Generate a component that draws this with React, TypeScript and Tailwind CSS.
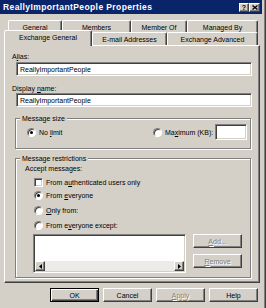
import React from 'react'

const raised =
  'border border-t-white border-l-white border-r-[#404040] border-b-[#404040] shadow-[inset_-1px_-1px_0_#808080]'
const sunken =
  'border border-t-[#808080] border-l-[#808080] border-r-white border-b-white shadow-[inset_1px_1px_0_#404040,inset_-1px_-1px_0_#d4d0c8]'
const disabledText = 'text-[#808080] [text-shadow:1px_1px_0_#fff]'

function Radio({ checked }: { checked?: boolean }) {
  return (
    <span className="flex h-[9px] w-[9px] shrink-0 items-center justify-center rounded-full border border-t-[#808080] border-l-[#808080] border-r-white border-b-white bg-white shadow-[inset_1px_1px_0_#404040]">
      {checked && <span className="h-[3px] w-[3px] rounded-full bg-black" />}
    </span>
  )
}

function Check() {
  return <span className={`h-[9px] w-[9px] shrink-0 bg-white ${sunken}`} />
}

function Button({ children, disabled, isDefault }: { children: React.ReactNode; disabled?: boolean; isDefault?: boolean }) {
  const frame = isDefault
    ? 'border border-black shadow-[inset_1px_1px_0_#fff,inset_-1px_-1px_0_#404040,inset_-2px_-2px_0_#808080]'
    : raised
  return (
    <div className={`flex h-[14px] w-[49px] items-center justify-center leading-[9px] ${frame} ${disabled ? disabledText : ''}`}>
      {children}
    </div>
  )
}

function Tab({ label, width, selected }: { label: string; width: string; selected?: boolean }) {
  return (
    <div
      className={`flex shrink-0 items-center justify-center rounded-t-[2px] border-t border-l border-r border-t-white border-l-white border-r-[#404040] bg-[#d4d0c8] shadow-[inset_-1px_0_0_#808080] leading-[9px] ${width} ${
        selected ? 'relative z-10 -mb-px h-[16px] pb-[2px]' : 'h-[13px] pt-[1px]'
      }`}
    >
      {label}
    </div>
  )
}

export default function App() {
  return (
    <div className="flex h-[308px] w-[266px] flex-col overflow-hidden border-r border-r-[#404040] bg-[#d4d0c8] font-['Liberation_Sans',Arial,sans-serif] text-[7px] text-black shadow-[inset_-1px_0_0_#808080]">
      {/* title bar */}
      <div className="flex h-[14px] w-[262px] shrink-0 items-center bg-[#0a246a] pl-[3px] pr-[2px]">
        <span className="flex-1 text-[8.5px] font-bold leading-[10px] tracking-[0.4px] text-white">
          ReallyImportantPeople Properties
        </span>
        <div className={`flex h-[9px] w-[10px] items-center justify-center text-[7px] font-bold leading-none ${raised} bg-[#d4d0c8]`}>?</div>
        <div className={`flex h-[9px] w-[11px] items-center justify-center ${raised} bg-[#d4d0c8]`}>
          <svg width="6" height="5" viewBox="0 0 6 5">
            <path d="M0.5 0.5 L5.5 4.5 M5.5 0.5 L0.5 4.5" stroke="#000" strokeWidth="1.3" />
          </svg>
        </div>
      </div>

      <div className="ml-[4px] flex w-[256px] flex-col">
        {/* tabs */}
        <div className="mt-[6px] flex h-[12px] pl-[4px]">
          <Tab label="General" width="w-[54px]" />
          <Tab label="Members" width="w-[69px]" />
          <Tab label="Member Of" width="w-[56px]" />
          <Tab label="Managed By" width="w-[71px]" />
        </div>
        <div className="flex h-[13px] items-end">
          <Tab label="Exchange General" width="w-[88px]" selected />
          <Tab label="E-mail Addresses" width="w-[75px]" />
          <Tab label="Exchange Advanced" width="w-[91px]" />
        </div>

        {/* page */}
        <div className="flex h-[238px] flex-col border border-t-white border-l-white border-r-[#404040] border-b-[#404040] shadow-[inset_-1px_-1px_0_#808080]">
          <div className="ml-[7px] mt-[6px] leading-[9px]">
            A<u>l</u>ias:
          </div>
          <div className={`ml-[11px] mt-[1px] flex h-[14px] w-[236px] items-center bg-white pl-[3px] leading-[9px] ${sunken}`}>
            ReallyImportantPeople
          </div>
          <div className="ml-[7px] mt-[8px] leading-[9px]">
            Display <u>n</u>ame:
          </div>
          <div className={`ml-[11px] flex h-[14px] w-[236px] items-center bg-white pl-[3px] leading-[9px] ${sunken}`}>
            ReallyImportantPeople
          </div>

          <fieldset className="ml-[10px] mt-[7px] w-[236px] border border-[#808080] pb-[8px] pt-[1px] shadow-[1px_1px_0_#fff,inset_1px_1px_0_#fff]">
            <legend className="ml-[4px] bg-[#d4d0c8] px-[2px] leading-[9px]">Message size</legend>
            <div className="flex h-[16px] items-center pl-[11px]">
              <div className="flex w-[126px] items-center gap-[3px] leading-[9px]">
                <Radio checked />
                <span>
                  No <u>l</u>imit
                </span>
              </div>
              <div className="flex items-center gap-[3px] leading-[9px]">
                <Radio />
                <span>
                  Ma<u>x</u>imum (KB):
                </span>
              </div>
              <div className={`ml-[2px] h-[16px] w-[32px] bg-white ${sunken}`} />
            </div>
          </fieldset>

          <fieldset className="ml-[10px] mt-[5px] w-[236px] border border-[#808080] pb-[4px] pl-[9px] shadow-[1px_1px_0_#fff,inset_1px_1px_0_#fff]">
            <legend className="-ml-[5px] bg-[#d4d0c8] px-[2px] leading-[9px]">Message restrictions</legend>
            <div className="mt-[1px] leading-[9px]">Accept messages:</div>
            <div className="ml-[9px] mt-[5px] flex items-center gap-[3px] leading-[9px]">
              <Check />
              <span>
                From a<u>u</u>thenticated users only
              </span>
            </div>
            <div className="ml-[9px] mt-[4px] flex items-center gap-[3px] leading-[9px]">
              <Radio checked />
              <span>
                From <u>e</u>veryone
              </span>
            </div>
            <div className="ml-[9px] mt-[6px] flex items-center gap-[3px] leading-[9px]">
              <Radio />
              <span>
                <u>O</u>nly from:
              </span>
            </div>
            <div className="ml-[9px] mt-[6px] flex items-center gap-[3px] leading-[9px]">
              <Radio />
              <span>
                From e<u>v</u>eryone except:
              </span>
            </div>
            <div className="ml-[8px] mt-[4px] flex gap-[7px]">
              <div className={`flex h-[39px] w-[153px] flex-col justify-end bg-white ${sunken}`}>
                <div className="mb-px ml-px mr-px flex h-[10px] bg-[#ecebe8]">
                  <div className={`flex h-[10px] w-[10px] items-center justify-center bg-[#d4d0c8] ${raised}`}>
                    <svg width="3" height="5" viewBox="0 0 3 5">
                      <path d="M3 0 L0 2.5 L3 5 Z" fill="#000" />
                    </svg>
                  </div>
                  <div className="flex-1" />
                  <div className={`flex h-[10px] w-[10px] items-center justify-center bg-[#d4d0c8] ${raised}`}>
                    <svg width="3" height="5" viewBox="0 0 3 5">
                      <path d="M0 0 L3 2.5 L0 5 Z" fill="#000" />
                    </svg>
                  </div>
                </div>
              </div>
              <div className="flex flex-col gap-[6px]">
                <Button disabled>
                  <span>
                    <u>A</u>dd...
                  </span>
                </Button>
                <Button disabled>
                  <span>
                    <u>R</u>emove
                  </span>
                </Button>
              </div>
            </div>
          </fieldset>
        </div>

        {/* dialog buttons */}
        <div className="ml-[46px] mt-[5px] flex gap-[4px]">
          <Button isDefault>OK</Button>
          <Button>Cancel</Button>
          <Button disabled>
            <span>
              <u>A</u>pply
            </span>
          </Button>
          <Button>Help</Button>
        </div>
      </div>
    </div>
  )
}
